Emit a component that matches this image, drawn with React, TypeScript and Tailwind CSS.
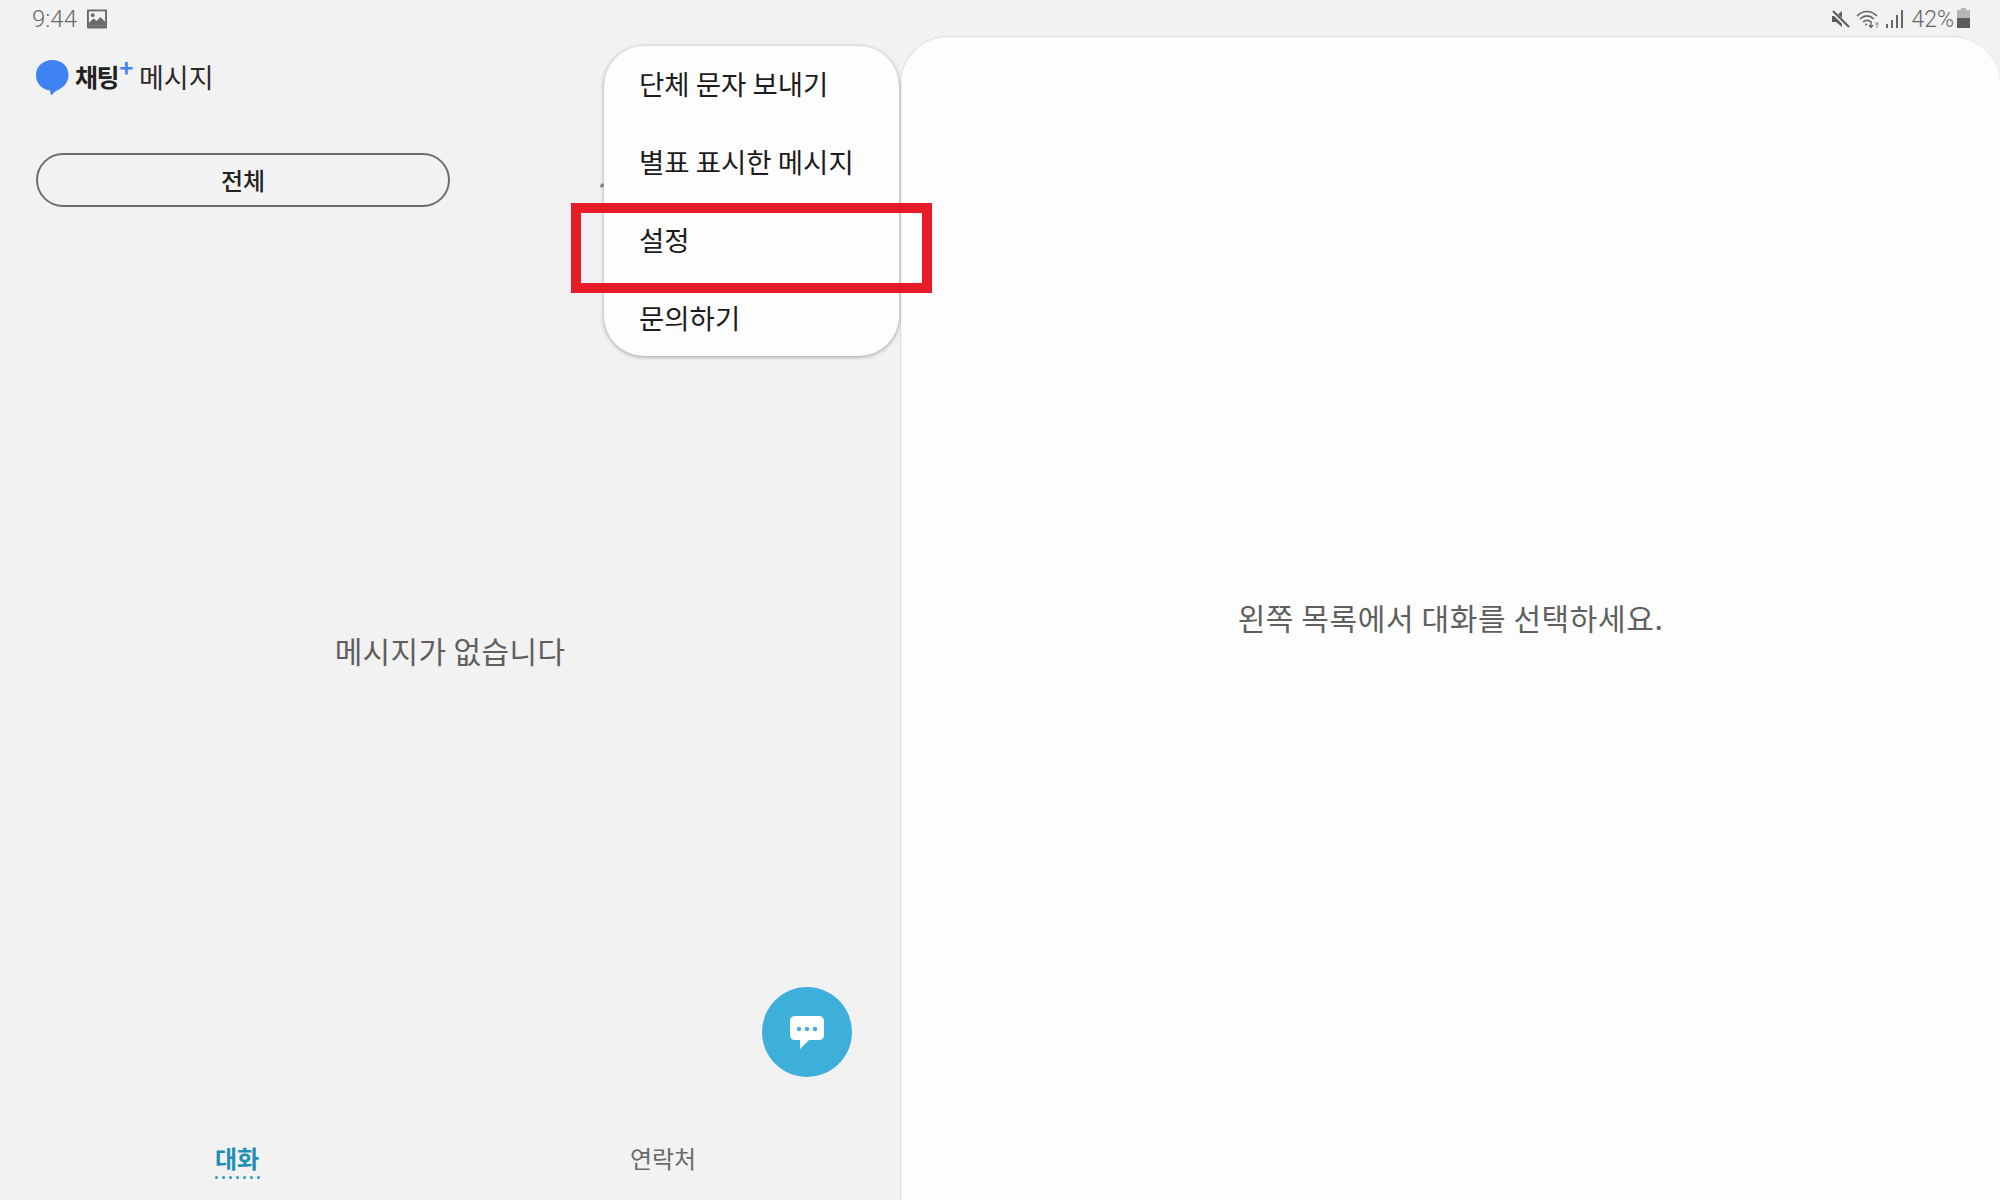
const cjk = "font-['Noto_Sans_CJK_KR','Noto_Sans',sans-serif]";

function ImageIcon() {
  return (
    <svg width="20" height="20" viewBox="0 0 21 20" className="ml-[10px]">
      <rect x="0" y="0" width="21" height="20" rx="1" fill="#6a6a6a" />
      <rect x="2" y="2" width="17" height="15" fill="#f2f2f2" />
      <circle cx="6" cy="6" r="2" fill="#6a6a6a" />
      <path d="M2 17 L2 14 L7 9.5 L10 12 L14 8 L19 13 L19 17 Z" fill="#6a6a6a" />
    </svg>
  );
}

function StatusIcons() {
  return (
    <div className="flex items-center text-[#666666]">
      <svg width="19" height="18" viewBox="0 0 19 18">
        <path d="M1 6 H5 L11 1 V17 L5 12 H1 Z" fill="#5e5e5e" />
        <path d="M1 1 L17 17" stroke="#f2f2f2" strokeWidth="4" />
        <path d="M2 1 L18 17" stroke="#5e5e5e" strokeWidth="2.2" />
      </svg>
      <svg width="25" height="19" viewBox="0 0 25 19" className="ml-[6px]" fill="none" stroke="#666666" strokeWidth="1.6">
        <path d="M1 6 C7 0 15 0 21 6" />
        <path d="M4 9 C8.5 5 13.5 5 18 9" />
        <path d="M7 12 C9.5 10 12.5 10 15 12" />
        <circle cx="10" cy="14.5" r="1" fill="#666666" stroke="none" />
        <path d="M15 11 V17 M13 15 L15 17.5 L17 15" strokeWidth="1.3" />
        <path d="M21 18 V13 M19.5 14.5 L21 12.5 L22.5 14.5" stroke="#a8a8a8" strokeWidth="1.3" />
      </svg>
      <svg width="17" height="18" viewBox="0 0 17 18" className="ml-[5px]" fill="#666666">
        <rect x="0" y="14" width="2" height="4" />
        <rect x="5" y="10" width="2" height="8" />
        <rect x="10" y="5" width="2" height="13" />
        <rect x="15" y="0" width="2" height="18" />
      </svg>
      <span className="ml-2 text-[23px] leading-none font-['Roboto',sans-serif] font-light">42%</span>
      <svg width="13" height="20" viewBox="0 0 13 20" className="ml-[3px] mb-[2px]">
        <rect x="4" y="0" width="5" height="2" fill="#b5b5b5" />
        <rect x="0" y="2" width="13" height="8" fill="#b5b5b5" />
        <rect x="0" y="10" width="13" height="10" fill="#5c5c5c" />
      </svg>
    </div>
  );
}

function Logo() {
  return (
    <svg width="33" height="36" viewBox="0 0 33 36" className="mt-[3px]">
      <path
        d="M16.5 0 C26 0 32.5 6.5 32.5 15 C32.5 23 27 28 20 31 L15 35.5 L14 30.5 C6 29.5 0 23.5 0 15 C0 6.5 7 0 16.5 0 Z"
        fill="#3f82f2"
      />
    </svg>
  );
}

function ChatFabIcon() {
  return (
    <svg width="34" height="33" viewBox="0 0 34 33">
      <path
        d="M5 0 H29 C32 0 34 2 34 5 V19 C34 22 32 24 29 24 H19 L10 33 V24 H5 C2 24 0 22 0 19 V5 C0 2 2 0 5 0 Z"
        fill="#ffffff"
      />
      <circle cx="9" cy="13" r="2.2" fill="#3eaedb" />
      <circle cx="17" cy="13" r="2.2" fill="#3eaedb" />
      <circle cx="25" cy="13" r="2.2" fill="#3eaedb" />
    </svg>
  );
}

const menuItems = ["단체 문자 보내기", "별표 표시한 메시지", "설정", "문의하기"];
const tabDots = [0, 1, 2, 3, 4, 5, 6];

export default function App() {
  return (
    <div className={`relative h-[1200px] w-[2000px] overflow-hidden bg-[#f2f2f2] ${cjk}`}>
      <div className="flex h-[36px] items-center justify-between pl-[32px] pr-[30px] pt-[2px]">
        <div className="flex items-center">
          <span className="text-[24px] leading-none text-[#6a6a6a] font-['Roboto',sans-serif] font-light">9:44</span>
          <ImageIcon />
        </div>
        <StatusIcons />
      </div>

      <div className="flex h-[1164px]">
        <div className="relative flex w-[900px] flex-col">
          <div className="flex h-[48px] items-center pl-[36px] pt-[16px] box-content">
            <Logo />
            <span className="relative ml-[6px] text-[25px] leading-none font-bold tracking-[-1.5px] text-[#222222]">
              채팅
              <span className="absolute -top-[9px] -right-[14px] text-[24px] leading-none font-bold text-[#3f82f2]">+</span>
            </span>
            <span className="ml-[21px] mt-[1px] text-[27px] leading-none text-[#2a2a2a]">메시지</span>
          </div>

          <div className="mt-[53px] pl-[36px]">
            <div className="flex h-[54px] w-[414px] items-center justify-center rounded-full border-2 border-[#6e6e6e] text-[24px] font-medium text-[#222222]">
              전체
            </div>
          </div>

          <div className="flex flex-1 items-center justify-center pb-[12px]">
            <span className="text-[30px] tracking-[0.35px] text-[#5f5f5f]">메시지가 없습니다</span>
          </div>

          <div className="flex h-[95px] items-start pt-[38px]">
            <div className="flex w-[474px] justify-center">
              <div className="flex flex-col items-center">
                <span className="text-[24px] leading-[30px] font-bold text-[#1f8fb8]">대화</span>
                <div className="mt-[3px] flex gap-[4px]">
                  {tabDots.map((d) => (
                    <div key={d} className="h-[3px] w-[3px] rounded-full bg-[#2c97bd]" />
                  ))}
                </div>
              </div>
            </div>
            <div className="flex w-[378px] justify-center">
              <span className="text-[24px] leading-[30px] text-[#6a6a6a]">연락처</span>
            </div>
          </div>

          <button className="absolute left-[762px] top-[951px] flex h-[90px] w-[90px] items-center justify-center rounded-full bg-[#3eaedb]">
            <ChatFabIcon />
          </button>
        </div>

        <div className="flex flex-1 items-center justify-center rounded-t-[48px] border-t border-l border-[#dcdcdc] bg-[#fdfdfd] pb-[2px]">
          <span className="text-[30px] tracking-[0.6px] text-[#5f5f5f]">왼쪽 목록에서 대화를 선택하세요.</span>
        </div>
      </div>

      {/* edge of the second filter pill, mostly hidden by the menu */}
      <div className="absolute left-[600px] top-[184px] h-[3px] w-[4px] -rotate-45 bg-[#8a8a8a]" />

      <div className="absolute left-[604px] top-[46px] h-[310px] w-[295px] rounded-[40px] bg-[#fdfdfd] shadow-[0_1px_4px_rgba(0,0,0,0.35)]">
        {menuItems.map((item) => (
          <div key={item} className="flex h-[78px] items-center pb-[2px] pl-[35px] text-[27.5px] leading-none text-[#1c1c1c]">
            {item}
          </div>
        ))}
      </div>

      <div className="absolute left-[571px] top-[203px] h-[90px] w-[361px] border-[10px] border-[#e81c28]" />
    </div>
  );
}
